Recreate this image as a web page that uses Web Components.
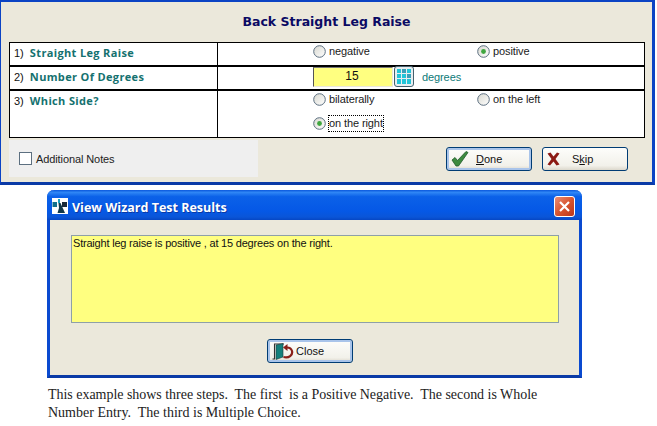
<!DOCTYPE html>
<html>
<head>
<meta charset="utf-8">
<title>Back Straight Leg Raise</title>
<style>
  html, body { margin: 0; padding: 0; background: #fff; }
  body { width: 657px; height: 426px; overflow: hidden; font-family: "Liberation Sans", sans-serif; }
</style>
</head>
<body>

<wizard-panel heading="Back Straight Leg Raise">
  <step-row num="1)" label="Straight Leg Raise" rule="2" height="22">
    <radio-option>negative</radio-option>
    <radio-option checked>positive</radio-option>
  </step-row>
  <step-row num="2)" label="Number Of Degrees" rule="2" height="22">
    <number-entry value="15" unit="degrees"></number-entry>
  </step-row>
  <step-row num="3)" label="Which Side?" height="46">
    <radio-option>bilaterally</radio-option>
    <radio-option>on the left</radio-option>
    <radio-option checked focused>on the right</radio-option>
  </step-row>
  <notes-box slot="notes">Additional Notes</notes-box>
  <xp-button slot="actions" icon="check" key="D" rest="one" focused></xp-button>
  <xp-button slot="actions" icon="cross" pre="S" key="k" rest="ip"></xp-button>
</wizard-panel>

<results-window heading="View Wizard Test Results">Straight leg raise is positive , at 15 degrees on the right.</results-window>

<page-caption><span style="letter-spacing: -0.03px">This example shows three steps.  The first  is a Positive Negative.  The second is Whole</span>
Number Entry.  The third is Multiple Choice.</page-caption>

<script>
class WizardPanel extends HTMLElement {
  constructor() {
    super();
    this.attachShadow({mode: 'open'});
  }
  connectedCallback() {
    this.shadowRoot.innerHTML = `
      <style>
        :host {
          display: block;
          box-sizing: border-box;
          width: 655px;
          height: 185px;
          background: #ebe8db;
          border-style: solid;
          border-color: #0b43c4;
          border-width: 2px 3px 3px 1px;
          border-bottom-color: #0a3aa6;
        }
        h1 {
          margin: 0;
          height: 40px;
          box-sizing: border-box;
          padding-top: 12px;
          text-align: center;
          font: bold 12.5px "DejaVu Sans", sans-serif;
          color: #0a0a64;
        }
        .steps {
          margin-left: 8px;
          width: 636px;
          box-sizing: border-box;
          border: 1px solid #000;
          background: #fff;
        }
        .foot {
          display: flex;
          margin-left: 8px;
          margin-top: 2px;
        }
        .actions {
          display: flex;
          gap: 10px;
          margin-left: 188px;
          margin-top: 7px;
        }
      </style>
      <h1>${this.getAttribute('heading')}</h1>
      <div class="steps"><slot></slot></div>
      <div class="foot">
        <slot name="notes"></slot>
        <div class="actions"><slot name="actions"></slot></div>
      </div>
    `;
  }
}
customElements.define('wizard-panel', WizardPanel);

class StepRow extends HTMLElement {
  constructor() {
    super();
    this.attachShadow({mode: 'open'});
  }
  connectedCallback() {
    const rule = this.getAttribute('rule') || '0';
    this.shadowRoot.innerHTML = `
      <style>
        :host {
          display: grid;
          grid-template-columns: 208px 1fr;
          grid-template-rows: minmax(0, 1fr);
          height: ${this.getAttribute('height')}px;
          border-bottom: ${rule}px solid #000;
          font: 11px "Liberation Sans", sans-serif;
        }
        .label {
          box-sizing: border-box;
          border-right: 1px solid #000;
          padding: 2px 0 0 4px;
          color: #111;
          white-space: nowrap;
        }
        b {
          font: bold 11px "Open Sans", sans-serif;
          color: #14716f;
          margin-left: 3px;
          letter-spacing: 0.35px;
        }
        .options {
          display: grid;
          grid-template-columns: 164px 164px;
          grid-auto-rows: 24px;
          padding-left: 95px;
          align-content: start;
          min-height: 0;
        }
        ::slotted(number-entry) { grid-column: 1 / 3; }
      </style>
      <div class="label">${this.getAttribute('num')} <b>${this.getAttribute('label')}</b></div>
      <div class="options"><slot></slot></div>
    `;
  }
}
customElements.define('step-row', StepRow);

class RadioOption extends HTMLElement {
  constructor() {
    super();
    this.attachShadow({mode: 'open'});
  }
  connectedCallback() {
    const dot = this.hasAttribute('checked')
      ? '<circle cx="6.5" cy="6.5" r="2.4" fill="#3fa63f"/>' : '';
    const focus = this.hasAttribute('focused');
    this.shadowRoot.innerHTML = `
      <style>
        :host {
          display: flex;
          align-items: center;
          height: 17px;
          gap: 3px;
          font: 11px "Liberation Sans", sans-serif;
          letter-spacing: -0.1px;
          color: #1a1a1a;
          white-space: nowrap;
        }
        svg { flex: none; }
        span {
          outline: ${focus ? '1px dotted #000' : 'none'};
          line-height: 15px;
        }
      </style>
      <svg width="13" height="13" viewBox="0 0 13 13">
        <defs><linearGradient id="g" x1="0" y1="0" x2="1" y2="1">
          <stop offset="0" stop-color="#d8d8d0"/><stop offset="1" stop-color="#fff"/>
        </linearGradient></defs>
        <circle cx="6.5" cy="6.5" r="5.8" fill="url(#g)" stroke="#5c6f80"/>
        ${dot}
      </svg>
      <span><slot></slot></span>
    `;
  }
}
customElements.define('radio-option', RadioOption);

class NumberEntry extends HTMLElement {
  constructor() {
    super();
    this.attachShadow({mode: 'open'});
  }
  connectedCallback() {
    this.shadowRoot.innerHTML = `
      <style>
        :host {
          display: flex;
          align-items: flex-start;
          height: 20px;
          font: 11px "Liberation Sans", sans-serif;
        }
        .field {
          box-sizing: border-box;
          width: 80px;
          height: 20px;
          background: #ffff80;
          border-left: 1px solid #555;
          border-top: 1px solid #777;
          border-right: 1px solid #ebe8db;
          border-bottom: 1px solid #ebe8db;
          text-align: center;
          line-height: 16px;
          font-size: 12px;
          color: #111;
          padding-right: 2px;
        }
        svg { flex: none; margin-left: 1px; margin-top: -1px; }
        .unit { color: #0e7a78; margin-left: 8px; line-height: 20px; letter-spacing: -0.1px; }
      </style>
      <div class="field">${this.getAttribute('value')}</div>
      <svg width="20" height="21" viewBox="0 0 20 21">
        <rect x="0.5" y="0.5" width="19" height="20" rx="2.5" fill="#e8eef0" stroke="#45606e"/>
        <g fill="#22c4d8">
          <rect x="3" y="3" width="4" height="4"/><rect x="8" y="3" width="4" height="4" fill="#3a9fb8"/><rect x="13" y="3" width="4" height="4"/>
          <rect x="3" y="8" width="4" height="4"/><rect x="8" y="8" width="4" height="4"/><rect x="13" y="8" width="4" height="4" fill="#3a9fb8"/>
          <rect x="3" y="13" width="4" height="5"/><rect x="8" y="13" width="4" height="5"/><rect x="13" y="13" width="4" height="5"/>
        </g>
      </svg>
      <span class="unit">${this.getAttribute('unit')}</span>
    `;
  }
}
customElements.define('number-entry', NumberEntry);

class NotesBox extends HTMLElement {
  constructor() {
    super();
    this.attachShadow({mode: 'open'});
  }
  connectedCallback() {
    this.shadowRoot.innerHTML = `
      <style>
        :host {
          display: flex;
          align-items: center;
          flex: none;
          box-sizing: border-box;
          width: 249px;
          height: 37px;
          padding-left: 10px;
          gap: 4px;
          background: #efefef;
          font: 11px "Liberation Sans", sans-serif;
          letter-spacing: -0.1px;
          color: #222;
        }
        i {
          display: block;
          box-sizing: border-box;
          width: 13px;
          height: 13px;
          background: #fff;
          border: 1px solid #5c6f80;
        }
      </style>
      <i></i><slot></slot>
    `;
  }
}
customElements.define('notes-box', NotesBox);

const ICONS = {
  check: `<svg width="18" height="16" viewBox="0 0 18 16">
    <path d="M1 9 L4 6.5 L6.5 9.5 L15 0.5 L17 1.5 L7.5 15 L5 15 Z" fill="#3d8a3f" stroke="#1f5a2a" stroke-width="0.8"/>
  </svg>`,
  cross: `<svg width="13" height="14" viewBox="0 0 13 14">
    <path d="M0.5 1.5 L3.5 0.5 L6.5 4.5 L10 0.5 L12.5 1.5 L8.5 7 L12.5 12.5 L9.5 13.5 L6.5 9.5 L3 13.5 L0.5 12.5 L4.5 7 Z" fill="#8c1a14"/>
  </svg>`,
  door: `<svg width="22" height="17" viewBox="0 0 22 17">
    <path d="M0.5 16 H2.5 V1 H12" fill="none" stroke="#333" stroke-width="1.1"/>
    <path d="M4 2 L11 0.5 V14 L4 16.5 Z" fill="#14807c" stroke="#1c3b3b" stroke-width="0.6"/>
    <path d="M11.5 14 C17 15.5 21 12 20 8 C19.3 5.5 17 4.5 15 4.5" fill="none" stroke="#8a1f18" stroke-width="2.2"/>
    <path d="M15.5 1 L15.5 8 L11 4.5 Z" fill="#8a1f18"/>
  </svg>`
};

class XpButton extends HTMLElement {
  constructor() {
    super();
    this.attachShadow({mode: 'open'});
  }
  connectedCallback() {
    const icon = this.getAttribute('icon');
    const pre = this.getAttribute('pre') || '';
    const key = this.getAttribute('key') || '';
    const rest = this.getAttribute('rest') || '';
    this.shadowRoot.innerHTML = `
      <style>
        :host {
          display: flex;
          align-items: center;
          box-sizing: border-box;
          width: 86px;
          height: 24px;
          border: 1px solid #003c74;
          border-radius: 3px;
          background: linear-gradient(#fdfdfb, #f2f1ea 80%, #dcd8cc);
          font: 11px "Liberation Sans", sans-serif;
          color: #111;
          padding-left: 3px;
        }
        :host([focused]) {
          box-shadow: inset 0 0 0 2px #a9c4ea;
        }
        .ico { width: 24px; display: flex; padding-left: 1px; box-sizing: border-box; flex: none; }
        .txt { margin-left: 2px; }
        :host([icon="door"]) .txt { margin-left: 1px; }
        u { text-underline-offset: 1px; }
      </style>
      <span class="ico">${ICONS[icon]}</span>
      <span class="txt">${pre}<u>${key}</u>${rest}<slot></slot></span>
    `;
  }
}
customElements.define('xp-button', XpButton);

class ResultsWindow extends HTMLElement {
  constructor() {
    super();
    this.attachShadow({mode: 'open'});
  }
  connectedCallback() {
    this.shadowRoot.innerHTML = `
      <style>
        :host {
          display: block;
          box-sizing: border-box;
          width: 535px;
          height: 188px;
          margin: 5px 0 0 47px;
          background: #ebe8db;
          border: 3px solid #0a4ad0;
          border-top: none;
          border-bottom-color: #0a3aa6;
          border-radius: 7px 7px 0 0;
        }
        .bar {
          display: flex;
          align-items: center;
          height: 30px;
          margin: 0 -3px;
          padding: 1px 7px 0 5px;
          box-sizing: border-box;
          gap: 4px;
          border-radius: 7px 7px 0 0;
          background: linear-gradient(#0a57dc, #2f86f5 8%, #0b61e8 22%, #0558e6 70%, #0a55d8 90%, #0647c4);
          color: #fff;
          font: bold 12.5px "Open Sans", sans-serif;
          white-space: nowrap;
        }
        .title { flex: 1; text-shadow: 1px 1px 0 #0a3aa6; padding-top: 3px; }
        .logo { flex: none; }
        .close { flex: none; margin-top: 1px; }
        .memo {
          box-sizing: border-box;
          width: 488px;
          height: 88px;
          margin: 15px 0 0 21px;
          padding: 1px;
          background: #ffff80;
          border: 1px solid #8ea0a8;
          font: 11px "Liberation Sans", sans-serif;
          letter-spacing: -0.2px;
          color: #111;
        }
        .row { display: flex; justify-content: center; margin-top: 16px; padding-right: 9px; }
      </style>
      <div class="bar">
        <svg class="logo" width="16" height="16" viewBox="0 0 16 16">
          <rect width="16" height="16" fill="#fff"/>
          <rect x="0.5" y="4" width="4.5" height="5" fill="#12708c"/>
          <rect x="6" y="1" width="2" height="4" fill="#1aa0c0"/>
          <path d="M6.5 5 H8.5 L13 15 H5.5 L7 10 Z" fill="#12384a"/>
          <rect x="10" y="4" width="5" height="5" fill="#1a2a3a"/>
        </svg>
        <span class="title">${this.getAttribute('heading')}</span>
        <svg class="close" width="21" height="21" viewBox="0 0 21 21">
          <defs><linearGradient id="r" x1="0" y1="0" x2="1" y2="1">
            <stop offset="0" stop-color="#e8907a"/><stop offset="0.5" stop-color="#d9552f"/><stop offset="1" stop-color="#b8341a"/>
          </linearGradient></defs>
          <rect x="0.5" y="0.5" width="20" height="20" rx="2.5" fill="url(#r)" stroke="#fff"/>
          <path d="M6 6 L15 15 M15 6 L6 15" stroke="#fff" stroke-width="2.2"/>
        </svg>
      </div>
      <div class="memo"><slot></slot></div>
      <div class="row"><xp-button icon="door" rest="Close" focused></xp-button></div>
    `;
  }
}
customElements.define('results-window', ResultsWindow);

class PageCaption extends HTMLElement {
  constructor() {
    super();
    this.attachShadow({mode: 'open'});
  }
  connectedCallback() {
    // no whitespace round the slot: the host is white-space: pre
    this.shadowRoot.innerHTML = `<style>
        :host {
          display: block;
          margin: 8px 0 0 48px;
          font: 14px/18px "Liberation Serif", serif;
          color: #222;
          white-space: pre;
        }
      </style><slot></slot>`;
  }
}
customElements.define('page-caption', PageCaption);
</script>
</body>
</html>
